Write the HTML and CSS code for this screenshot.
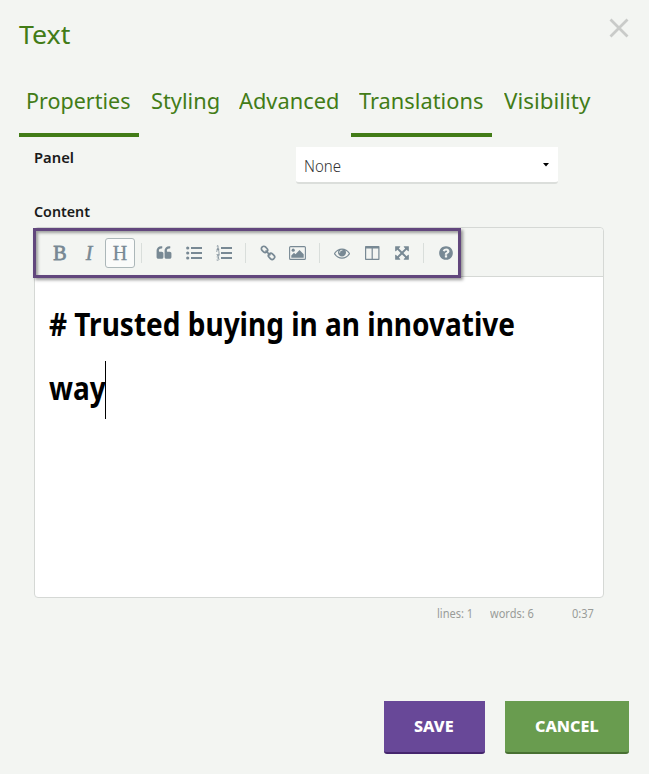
FILE: index.html
```html
<!DOCTYPE html>
<html lang="en">
<head>
<meta charset="utf-8">
<title>Text</title>
<link rel="stylesheet" href="styles.css">
</head>
<body>
<main class="dialog">
  <header class="head">
    <h1><span class="t title">Text</span></h1>
    <button class="close" aria-label="Close"><svg width="20" height="20" viewBox="0 0 20 20"><path d="M1.5 1.5l17 17M18.500 1.500l-17 17"/></svg></button>
  </header>
  <nav class="tabs">
    <a class="tab on w-prop"><span class="t">Properties</span></a>
    <a class="tab w-styl"><span class="t">Styling</span></a>
    <a class="tab w-adv"><span class="t">Advanced</span></a>
    <a class="tab on w-trans"><span class="t">Translations</span></a>
    <a class="tab w-vis"><span class="t">Visibility</span></a>
  </nav>
  <section class="form">
    <div class="row">
      <label><span class="t label">Panel</span></label>
      <div class="select"><span class="t none">None</span><svg width="6" height="4" viewBox="0 0 6 4"><path d="M0 0h6L3 3.500z"/></svg></div>
    </div>
    <label class="content-label"><span class="t label content">Content</span></label>
    <div class="editor">
      <div class="toolbar">
        <button class="serif bold">B</button>
        <button class="serif italic">I</button>
        <button class="serif active">H</button>
        <i class="sep first"></i>
        <button><svg class="ic" viewBox="0 0 1792 1792"><path d="M832 960v384q0 80-56 136t-136 56h-384q-80 0-136-56t-56-136v-704q0-104 40.500-198.500t109.500-163.500 163.500-109.500 198.500-40.500h64q26 0 45 19t19 45v128q0 26-19 45t-45 19h-64q-106 0-181 75t-75 181v32q0 40 28 68t68 28h224q80 0 136 56t56 136zm896 0v384q0 80-56 136t-136 56h-384q-80 0-136-56t-56-136v-704q0-104 40.500-198.500t109.500-163.500 163.500-109.500 198.500-40.500h64q26 0 45 19t19 45v128q0 26-19 45t-45 19h-64q-106 0-181 75t-75 181v32q0 40 28 68t68 28h224q80 0 136 56t56 136z"/></svg></button>
        <button><svg class="ic" viewBox="0 0 16 16"><circle cx="1.700" cy="3" r="1.600"/><circle cx="1.700" cy="8" r="1.600"/><circle cx="1.700" cy="13" r="1.600"/><path d="M5 2h11v2H5zM5 7h11v2H5zM5 12h11v2H5z"/></svg></button>
        <button><svg class="ic" viewBox="0 0 16 16"><path d="M5 2h11v2H5zM5 7h11v2H5zM5 12h11v2H5z"/><path class="thin" d="M.8 1.200L2 .6v3.600M.7 4.300h2.600M.7 6.900Q2-.1 2.900 6.700T.8 9.700h2.500M.7 11.900h2.200L1.800 13.300q1.400 0 1.300 1-.3 1.400-2.500.7"/></svg></button>
        <i class="sep"></i>
        <button><svg class="ic line" viewBox="0 0 16 16"><rect x="1.200" y="2" width="6.600" height="4.800" rx="2.200" transform="rotate(45 4.500 4.400)"/><rect x="8.200" y="8.900" width="6.600" height="4.800" rx="2.200" transform="rotate(45 11.500 11.300)"/><path d="M5.500 5.500l4.900 4.900"/></svg></button>
        <button><svg class="ic wide" viewBox="0 0 17 14"><rect class="frame" x=".6" y=".6" width="15.800" height="12.800" rx="1"/><circle cx="4.200" cy="4.200" r="1.600"/><path d="M2.300 11.700V9.500L5 6.800l1.500 1.400 4-4.200 4.200 4.200v3.500z"/></svg></button>
        <i class="sep"></i>
        <button><svg class="ic" viewBox="0 0 1792 1792"><path d="M1664 960q-152-236-381-353 61 104 61 225 0 185-131.500 316.500t-316.500 131.500-316.500-131.500-131.500-316.500q0-121 61-225-229 117-381 353 133 205 333.500 326.500t434.500 121.500 434.500-121.500 333.500-326.500zm-720-384q0-20-14-34t-34-14q-125 0-214.500 89.500t-89.500 214.500q0 20 14 34t34 14 34-14 14-34q0-86 61-147t147-61q20 0 34-14t14-34zm848 384q0 34-20 69-140 230-376.500 368.500t-499.500 138.500-499.500-139-376.500-368q-20-35-20-69t20-69q140-229 376.500-368t499.500-139 499.500 139 376.500 368q20 35 20 69z"/></svg></button>
        <button><svg class="ic" viewBox="0 0 16 16"><path fill-rule="evenodd" d="M1.800 1h12.900q.8 0 .8.800v12.400q0 .8-.8.800H1.800q-.8 0-.8-.8V1.800Q1 1 1.800 1zM2.200 3.500v10.300h5.400V3.500zM8.800 3.500v10.300h5.500V3.500z"/></svg></button>
        <button><svg class="ic" viewBox="0 0 1792 1792"><path d="M1411 541l-355 355 355 355 144-144q29-31 70-14 39 17 39 59v448q0 26-19 45t-45 19h-448q-42 0-59-40-17-39 14-69l144-144-355-355-355 355 144 144q31 30 14 69-17 40-59 40h-448q-26 0-45-19t-19-45v-448q0-42 40-59 39-17 69 14l144 144 355-355-355-355-144 144q-19 19-45 19-12 0-24-5-40-17-40-59v-448q0-26 19-45t45-19h448q42 0 59 40 17 39-14 69l-144 144 355 355 355-355-144-144q-31-30-14-69 17-40 59-40h448q26 0 45 19t19 45v448q0 42-39 59-13 5-25 5-26 0-45-19z"/></svg></button>
        <i class="sep"></i>
        <button><svg class="ic" viewBox="0 0 1792 1792"><path d="M1024 1376v-192q0-14-9-23t-23-9h-192q-14 0-23 9t-9 23v192q0 14 9 23t23 9h192q14 0 23-9t9-23zm256-672q0-88-55.500-163t-138.500-116-170-41q-243 0-371 213-15 24 8 42l132 100q7 6 19 6 16 0 25-12 53-68 86-92 34-24 86-24 48 0 85.500 26t37.500 59q0 38-20 61t-68 45q-63 28-115.500 86.500t-52.500 125.500v36q0 14 9 23t23 9h192q14 0 23-9t9-23q0-19 21.500-49.500t54.500-49.500q32-18 49-28.500t46-35 44.500-48 28-60.500 12.500-81zm384 192q0 209-103 385.500t-279.500 279.500-385.500 103-385.500-103-279.500-279.500-103-385.500 103-385.500 279.500-279.500 385.500-103 385.500 103 279.500 279.500 103 385.500z"/></svg></button>
        <div class="highlight"></div>
      </div>
      <div class="area">
        <div class="line1"><span class="t big">&#35; Trusted buying in an innovative</span></div>
        <div class="line2"><span class="t big way">way</span><i class="caret"></i></div>
      </div>
    </div>
    <div class="status"><span class="t lines">lines: 1</span><span class="t words">words: 6</span><span class="t pos">0:37</span></div>
  </section>
  <footer class="foot">
    <button class="btn save"><span class="t">SAVE</span></button>
    <button class="btn cancel"><span class="t">CANCEL</span></button>
  </footer>
</main>
</body>
</html>
```
FILE: styles.css
```css
* { box-sizing: border-box; }
body { margin: 0; background: #f3f5f2; font-family: "Noto Sans", sans-serif; color: #1a1a1a; }
button { border: 0; padding: 0; background: none; font: inherit; color: inherit; }
h1 { margin: 0; font-size: 26px; font-weight: 400; line-height: 36px; }
.t { display: inline-block; white-space: nowrap; transform-origin: 0 50%; }
.title { transform: translateY(-1px) scaleX(1.03); }
.dialog { height: 774px; display: flex; flex-direction: column; }
.head { display: flex; justify-content: space-between; height: 80px; padding: 17px 20px 0 19px; color: #427c17; }
.close { height: 20px; margin-top: 1px; }
.close svg { display: block; fill: none; stroke: #c9cbc9; stroke-width: 2.8; }
.tabs { display: flex; gap: 4px; padding-left: 19px; height: 57px; color: #427c17; font-size: 22.5px; line-height: 42px; }
.tab { padding-left: 8px; border-bottom: 4px solid transparent; }
.on { border-color: #427c17; }
.w-prop { width: 120px; padding-left: 7px; }
.w-styl { width: 84px; }
.w-adv { width: 116px; }
.w-trans { width: 141px; }
.w-vis { width: 102px; }
.tab .t { transform: scaleX(.97); }
.w-prop .t { transform: scaleX(.956); }
.w-vis .t { transform: scaleX(.995); }
.form { padding: 10px 45px 0 34px; }
.row { display: flex; height: 55px; }
.row label { width: 262px; line-height: 21px; }
.label { font-size: 15px; font-weight: 600; transform: scaleX(.985); }
.content { transform: translateY(-1px) scaleX(.95); }
.select { width: 262px; height: 37px; padding: 0 9px 0 8px; display: flex; align-items: center; justify-content: space-between; background: #fff; border-bottom: 2px solid #dbdedb; border-radius: 0 0 3px 3px; font-size: 15.5px; color: #333; }
.none { font-weight: 300; transform: translateY(1px) scaleX(.97); }
.content-label { display: block; height: 25px; line-height: 20px; }
.editor { width: 570px; height: 371px; border: 1px solid #d5d8d5; border-radius: 4px; background: #fff; }
.toolbar { position: relative; display: flex; align-items: center; height: 49px; padding: 2px 0 0 10px; border-bottom: 1px solid #d5d8d5; background: #f3f5f2; border-radius: 4px 4px 0 0; color: #788994; }
.toolbar button { width: 30px; height: 30px; display: flex; align-items: center; justify-content: center; flex: none; }
.toolbar button:not(.serif) { padding-left: 1px; }
.toolbar .serif { font: 20px/28px "Liberation Serif", serif; -webkit-text-stroke: .3px; }
.toolbar .bold { -webkit-text-stroke: .8px; }
.toolbar .italic { font-style: italic; padding-right: 2px; -webkit-text-stroke: .5px; }
.toolbar .active { border: 1px solid #acb7b9; border-radius: 3px; background: #fafbfa; }
.sep { width: 1px; height: 20px; margin: 0 6px 0 7px; background: #d9dedb; flex: none; }
.sep.first { margin: 0 6px; }
.ic { width: 16px; height: 16px; fill: currentColor; }
.wide { width: 17px; height: 14px; }
.line, .thin, .frame { fill: none; stroke: currentColor; stroke-width: 1.700; }
.thin { stroke-width: .8; }
.frame { stroke-width: 1.100; }
.highlight { position: absolute; left: -2px; top: 0; width: 428px; height: 50px; border: 3px solid #62477d; box-shadow: 2px 2px 3px rgba(0,0,0,.4), inset 2px 2px 3px rgba(0,0,0,.35); }
.area { padding: 15px 14px; color: #000; }
.line1, .line2 { height: 64px; line-height: 64px; display: flex; }
.big { font-size: 32px; font-weight: 700; transform: scaleX(.875); }
.way { width: 56px; }
.caret { width: 1px; height: 58px; margin-top: 5px; background: #000; }
.status { display: flex; padding: 6px 0 0 403px; font-size: 12px; line-height: 20px; color: #999c99; }
.status .t { transform: scaleX(.92); }
.lines { width: 53px; }
.words { width: 82px; }
.foot { display: flex; justify-content: flex-end; gap: 20px; margin-top: auto; padding: 0 20px 20px; }
.btn { height: 53px; color: #fff; font-size: 15.5px; font-weight: 800; text-align: left; padding-left: 30px; border-radius: 0 0 3px 3px; }
.btn .t { transform: translateY(-1px) scaleX(1.04); }
.save { width: 101px; background: #684898; border-bottom: 2px solid #45266d; }
.cancel { width: 124px; background: #699c4f; border-bottom: 2px solid #487032; }
```
